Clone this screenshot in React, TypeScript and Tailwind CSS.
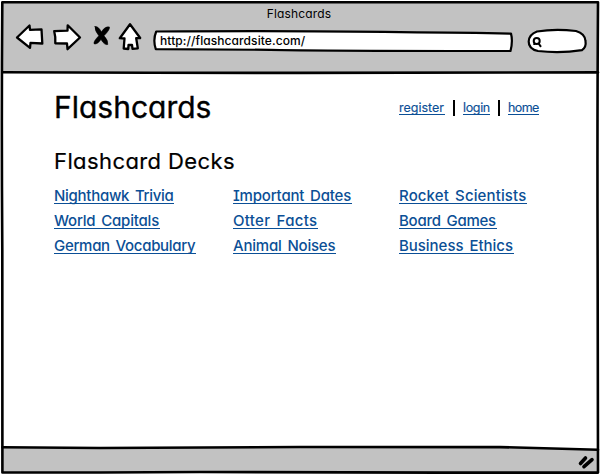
import React from "react";

type Deck = { name: string; size: string };

const columns: { offset: string; decks: Deck[] }[] = [
  {
    offset: "w-[179px]",
    decks: [
      { name: "Nighthawk Trivia", size: "w-[120px] tracking-[-0.28px]" },
      { name: "World Capitals", size: "w-[106px] tracking-[-0.2px]" },
      { name: "German Vocabulary", size: "w-[142px] tracking-[-0.3px]" },
    ],
  },
  {
    offset: "w-[166px]",
    decks: [
      { name: "Important Dates", size: "w-[119px] tracking-[-0.18px]" },
      { name: "Otter Facts", size: "w-[85px] tracking-[0.3px]" },
      { name: "Animal Noises", size: "w-[103px] tracking-[-0.2px]" },
    ],
  },
  {
    offset: "w-[140px]",
    decks: [
      { name: "Rocket Scientists", size: "w-[128px] tracking-[0.13px]" },
      { name: "Board Games", size: "w-[98px] tracking-[-0.25px]" },
      { name: "Business Ethics", size: "w-[115px] tracking-[-0.03px]" },
    ],
  },
];

const nav = [
  { name: "register", size: "w-[46px]" },
  { name: "login", size: "w-[27px] tracking-[-0.35px]" },
  { name: "home", size: "w-[31px] tracking-[-0.6px]" },
];

function BrowserControls() {
  return (
    <svg
      width="130"
      height="34"
      viewBox="14 20 130 34"
      fill="#fff"
      stroke="#000"
      strokeWidth="2.3"
      strokeLinejoin="round"
      strokeLinecap="round"
    >
      <path d="M17 37.5 29.5 25.5 30 29.8 41.5 29.3 42.3 43.5 30.5 42.8 30 47.8Z" />
      <path d="M54.2 31.2 67.5 30.6 67.7 25.3 80 37.5 67.5 49.2 67 43.5 55.3 43.3Q55.8 37 54.2 31.2Z" />
      <path
        d="M95 26.5Q98 25.8 101.5 31.8 105 26 109.5 27 110.2 29.5 104 35.8 108.5 40.5 107.8 44.5 104.5 45.5 101 39.5 97 45 94 43.8 93.2 41.5 98.8 35.8 94.5 30.5 95 26.5Z"
        fill="#000"
        strokeWidth="0.5"
      />
      <path d="M130 24.2 140.2 38 136.2 38.2 137.8 48.3 132.5 48.8 132 45 128.5 45 128.3 49 123.7 48.5 124.5 38.5 119.8 38.2Z" />
    </svg>
  );
}

function AddressBar() {
  return (
    <div className="relative flex h-[22px] w-[360px] items-center pl-[7px]">
      <svg className="absolute inset-0" width="360" height="22" viewBox="153 30 360 22">
        <path
          d="M156.2 31.5Q300 30.5 400 32.2 470 32.7 511 33.6Q513 41 510.5 51 350 51 270 49.8 210 49.3 155.8 49.2 152.7 40 156.2 31.5Z"
          fill="#fff"
          stroke="#000"
          strokeWidth="2.2"
          strokeLinejoin="round"
        />
      </svg>
      <span className="relative text-[12px] leading-[16px] font-medium tracking-[0.08px]">http://flashcardsite.com/</span>
    </div>
  );
}

function SearchField() {
  return (
    <svg width="62" height="28" viewBox="526 27 62 28" fill="#fff" stroke="#000" strokeWidth="2.2">
      <path d="M537 31.5Q555 28.5 576 31 585 33.5 585.5 41 586.5 47 582 50.2 560 53.5 538 51 528.5 49 528.7 41.5 529 34.5 537 31.5Z" />
      <circle cx="536.7" cy="41" r="3" strokeWidth="2" />
      <path d="M538.7 43.6 541 46.8M534.3 43.6V45" strokeWidth="2" />
    </svg>
  );
}

export default function App() {
  return (
    <div className="relative flex h-[475px] w-[600px] flex-col overflow-hidden bg-white font-[Inter,sans-serif] text-black [font-feature-settings:'cv11','cv08']">
      <header className="mx-[2px] mt-[2px] h-[70px] shrink-0 bg-[#c2c2c2]">
        <div className="flex h-[24px] items-center justify-center pr-[2px] text-[12px] leading-none tracking-[0.15px]">
          Flashcards
        </div>
        <div className="flex items-start pl-[12px]">
          <div className="-mt-[6px] shrink-0"><BrowserControls /></div>
          <div className="mt-[4px] ml-[9px] shrink-0"><AddressBar /></div>
          <div className="mt-[1px] ml-[13px] shrink-0"><SearchField /></div>
        </div>
      </header>

      <main className="flex-1 pl-[54px]">
        <div className="flex h-[72px] items-start justify-between pr-[61px]">
          <h1 className="mt-[15px] text-[30px] leading-[40px] tracking-[0px] [-webkit-text-stroke:0.35px_black]">Flashcards</h1>
          <nav className="mt-[28px] flex items-start text-[12.5px] leading-[16px] text-[#0b4f96] [-webkit-text-stroke:0.15px_#0b4f96]">
            {nav.map((item, i) => (
              <React.Fragment key={item.name}>
                {i > 0 && <span className="mx-[8px] h-[16px] w-[2px] bg-black" />}
                <a href="#" className={`${item.size} h-[15px] border-b border-[#0b4f96] whitespace-nowrap`}>
                  {item.name}
                </a>
              </React.Fragment>
            ))}
          </nav>
        </div>
        <h2 className="text-[22px] leading-[34px] tracking-[0.4px] [-webkit-text-stroke:0.2px_black]">Flashcard Decks</h2>
        <div className="mt-[6px] flex">
          {columns.map((column) => (
            <ul key={column.offset} className={column.offset}>
              {column.decks.map((deck) => (
                <li key={deck.name} className="h-[25px]">
                  <a
                    href="#"
                    className={`${deck.size} block h-[20px] border-b border-[#0b4f96] text-[15px] leading-[24px] font-medium [word-spacing:2px] whitespace-nowrap text-[#0b4f96]`}
                  >
                    {deck.name}
                  </a>
                </li>
              ))}
            </ul>
          ))}
        </div>
      </main>

      <svg className="pointer-events-none absolute inset-0" width="600" height="475" viewBox="0 0 600 475" fill="none" stroke="#000" strokeWidth="2.6" strokeLinejoin="round" strokeLinecap="round">
        <path d="M2.5 447.3 100 448 300 447 500 446.9 598 449.7V472.7H3Z" fill="#c2c2c2" stroke="none" />
        <path d="M2.3 2.2H598Q597.2 120 597.6 250 597.6 360 598 472.6L440 472.6 200 472 100 472.5 2.4 472.4Q2.2 350 2.3 250 1.4 120 2.3 2.2Z" />
        <path d="M2.5 72.2 150 72.8 300 72.9 598 72.4" />
        <path d="M2.5 447.3 100 448 300 447 500 447.1 598 449.7" />
        <path d="M580.5 463.5 585.5 458M584 466.7 592 459.7" strokeWidth="3.6" />
      </svg>
    </div>
  );
}
